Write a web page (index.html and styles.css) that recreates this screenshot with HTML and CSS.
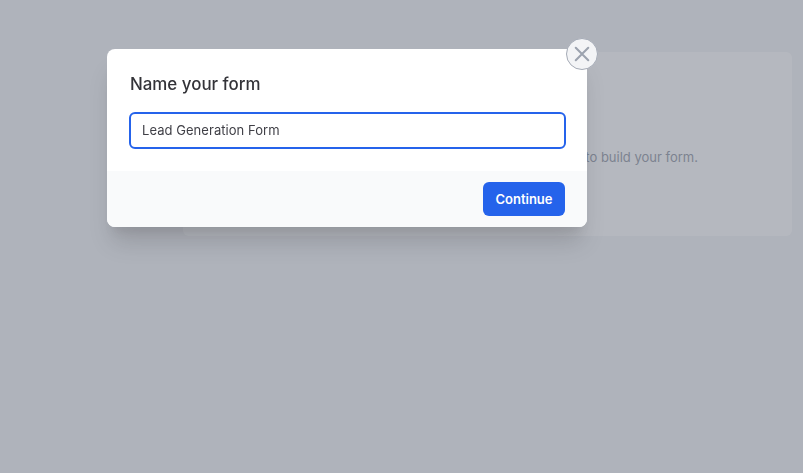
FILE: index.html
```html
<!DOCTYPE html>
<html lang="en">
<head>
<meta charset="utf-8">
<title>Name your form</title>
<link rel="stylesheet" href="styles.css">
</head>
<body>
<main class="page">
  <section class="card">
    <p class="hint">Click the button below to start adding fields to build your form.</p>
  </section>
</main>
<div class="overlay">
  <div class="modal">
    <button class="close" type="button" aria-label="Close">
      <svg width="20" height="20" viewBox="0 0 24 24" fill="none" stroke="currentColor" stroke-width="2.5" stroke-linecap="round" stroke-linejoin="round"><path d="M4.5 4.5l15 15M19.5 4.5l-15 15"/></svg>
    </button>
    <div class="modal-body">
      <h2 class="title">Name your form</h2>
      <input class="name-input" type="text" value="Lead Generation Form">
    </div>
    <div class="modal-footer">
      <button class="primary" type="button">Continue</button>
    </div>
  </div>
</div>
</body>
</html>
```
FILE: styles.css
```css
* { box-sizing: border-box; }
html, body { height: 100%; }
body {
  margin: 0;
  background: #f3f4f6;
  font-family: Inter, "Liberation Sans", sans-serif;
  overflow: hidden;
}
.page {
  padding: 52px 11px 0 183px;
}
.card {
  height: 184px;
  background: #fff;
  border-radius: 6px;
  padding: 97px 0 0 0;
}
.hint {
  margin: 0;
  font-size: 13px;
  line-height: 16px;
  color: #8d93a0;
  text-align: right;
  padding-right: 94px;
  white-space: nowrap;
}
.overlay {
  position: fixed;
  inset: 0;
  background: rgba(107, 114, 128, 0.5);
}
.modal {
  position: absolute;
  left: 107px;
  top: 49px;
  width: 480px;
  background: #fff;
  border-radius: 8px;
  box-shadow: 0 20px 25px -5px rgba(0, 0, 0, 0.14), 0 10px 10px -5px rgba(0, 0, 0, 0.06);
}
.close {
  position: absolute;
  top: -11px;
  right: -11px;
  width: 32px;
  height: 32px;
  padding: 0;
  display: flex;
  align-items: center;
  justify-content: center;
  border-radius: 50%;
  border: 1px solid #a5abb6;
  background: #f3f4f6;
  color: #9ca3af;
}
.modal-body {
  height: 122px;
  padding: 24px 21px 0 22px;
}
.title {
  margin: 0 0 16px 1px;
  font-size: 16.9px;
  line-height: 23px;
  font-weight: 500;
  color: #333338;
}
.name-input {
  display: block;
  width: 100%;
  height: 37px;
  padding: 0 11px 1px;
  border: 2px solid #2563eb;
  border-radius: 6px;
  outline: none;
  font: 400 13px Inter, "Liberation Sans", sans-serif;
  letter-spacing: 0.05px;
  color: #3f3f46;
  background: #fff;
}
.modal-footer {
  height: 56px;
  padding: 11px 22px;
  display: flex;
  justify-content: flex-end;
  background: #f9fafb;
  border-radius: 0 0 8px 8px;
}
.primary {
  width: 82px;
  height: 34px;
  padding: 0 0 1px;
  border: 0;
  border-radius: 6px;
  background: #2563eb;
  color: #fff;
  font: 600 13px Inter, "Liberation Sans", sans-serif;
}
```
